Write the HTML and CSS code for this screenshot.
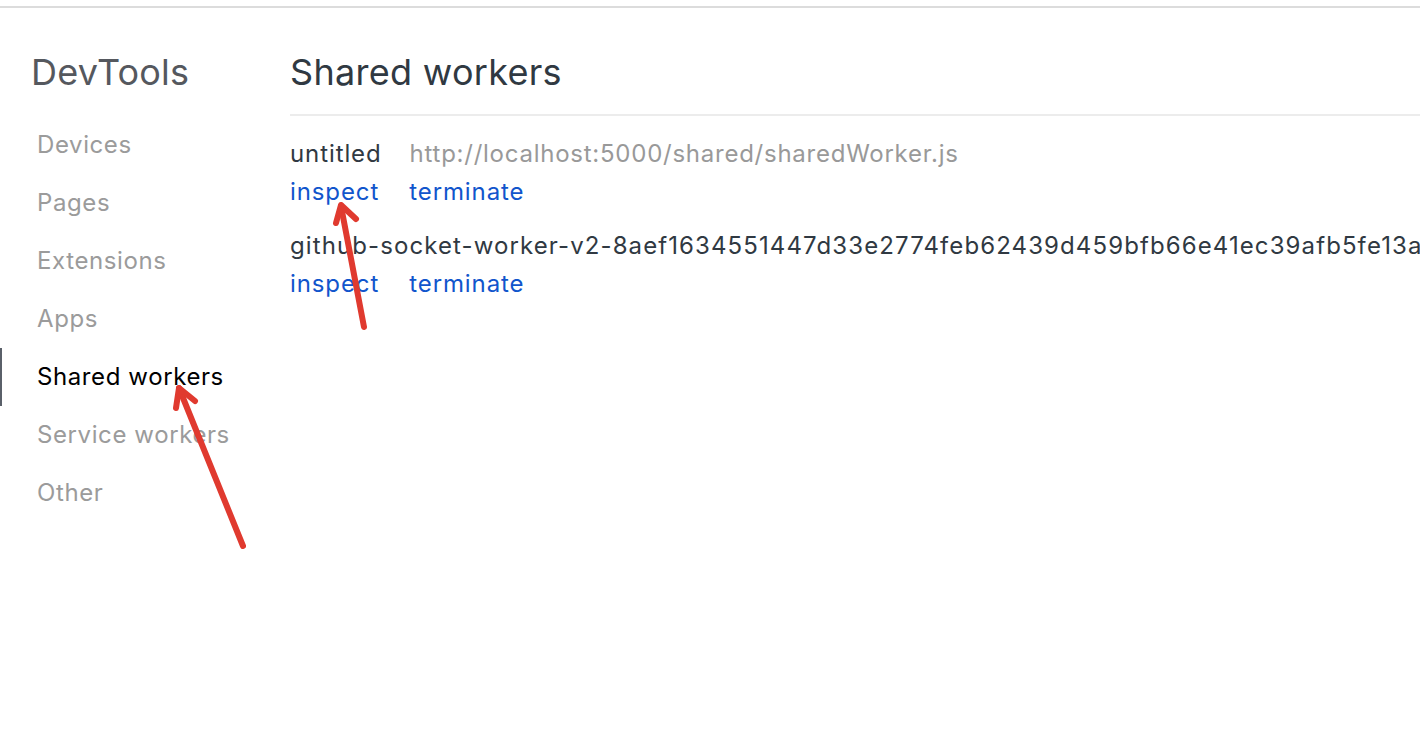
FILE: index.html
```html
<!DOCTYPE html>
<html>
<head>
<meta charset="utf-8">
<link rel="stylesheet" href="styles.css">
</head>
<body>
<div class="topbar"></div>
<div class="layout">
  <aside class="sidebar">
    <h1 class="title">DevTools</h1>
    <nav class="nav">
      <div class="nav-item">Devices</div>
      <div class="nav-item">Pages</div>
      <div class="nav-item">Extensions</div>
      <div class="nav-item">Apps</div>
      <div class="nav-item active">Shared workers</div>
      <div class="nav-item">Service workers</div>
      <div class="nav-item">Other</div>
    </nav>
  </aside>
  <main class="main">
    <h2 class="heading">Shared workers</h2>
    <div class="list">
      <div class="entry">
        <div class="row name-row"><span class="name">untitled</span><span class="url">http://localhost:5000/shared/sharedWorker.js</span></div>
        <div class="row actions"><span class="action">inspect</span><span class="action">terminate</span></div>
      </div>
      <div class="entry">
        <div class="row name-row"><span class="name long">github-socket-worker-v2-8aef1634551447d33e2774feb62439d459bfb66e41ec39afb5fe13a</span></div>
        <div class="row actions"><span class="action">inspect</span><span class="action">terminate</span></div>
      </div>
    </div>
  </main>
</div>
<svg class="arrows" width="1420" height="754" viewBox="0 0 1420 754">
  <g fill="none" stroke="#e03a2f" stroke-width="6" stroke-linecap="round" stroke-linejoin="round">
    <path d="M243 546 L179 388"/>
    <path d="M176 408 L179 388 L195 401"/>
    <path d="M364 327 L341 206"/>
    <path d="M336 223 L341 205 L356 219"/>
  </g>
</svg>
</body>
</html>
```
FILE: styles.css
```css
html, body {
  margin: 0;
  padding: 0;
  background: #fff;
  overflow: hidden;
  width: 1420px;
  height: 754px;
}
body {
  font-family: Inter, "Liberation Sans", sans-serif;
  font-size: 24px;
  color: #303942;
  position: relative;
}
.topbar {
  height: 6px;
  border-bottom: 2px solid #dcdcdc;
}
.layout {
  display: flex;
}
.sidebar {
  width: 290px;
  flex: none;
}
.title {
  margin: 42px 0 0 0;
  padding-left: 31px;
  font-size: 36px;
  font-weight: 400;
  line-height: 44px;
  letter-spacing: 0.2px;
  color: #55585e;
}
.nav {
  margin-top: 22px;
  display: flex;
  flex-direction: column;
}
.nav-item {
  line-height: 58px;
  padding-left: 35px;
  border-left: 2px solid transparent;
  color: #9b9b9b;
  letter-spacing: 0.6px;
}
.nav-item.active {
  border-left-color: #5a6069;
  color: #000;
}
.main {
  flex: 1;
  min-width: 0;
}
.heading {
  margin: 42px 0 0 0;
  font-size: 36px;
  font-weight: 400;
  line-height: 44px;
  letter-spacing: 0.3px;
  padding-bottom: 20px;
  border-bottom: 2px solid #ececec;
  color: #303942;
}
.list {
  margin-top: 19px;
  display: flex;
  flex-direction: column;
  gap: 16px;
}
.row {
  line-height: 38px;
  white-space: nowrap;
  letter-spacing: 0.9px;
}
.name {
  margin-right: 28px;
}
.name.long {
  letter-spacing: 1.1px;
}
.url {
  color: #999;
  letter-spacing: 0.75px;
}
.action {
  color: #1155cc;
  margin-right: 30px;
}
.arrows {
  position: absolute;
  left: 0;
  top: 0;
  pointer-events: none;
}
```
